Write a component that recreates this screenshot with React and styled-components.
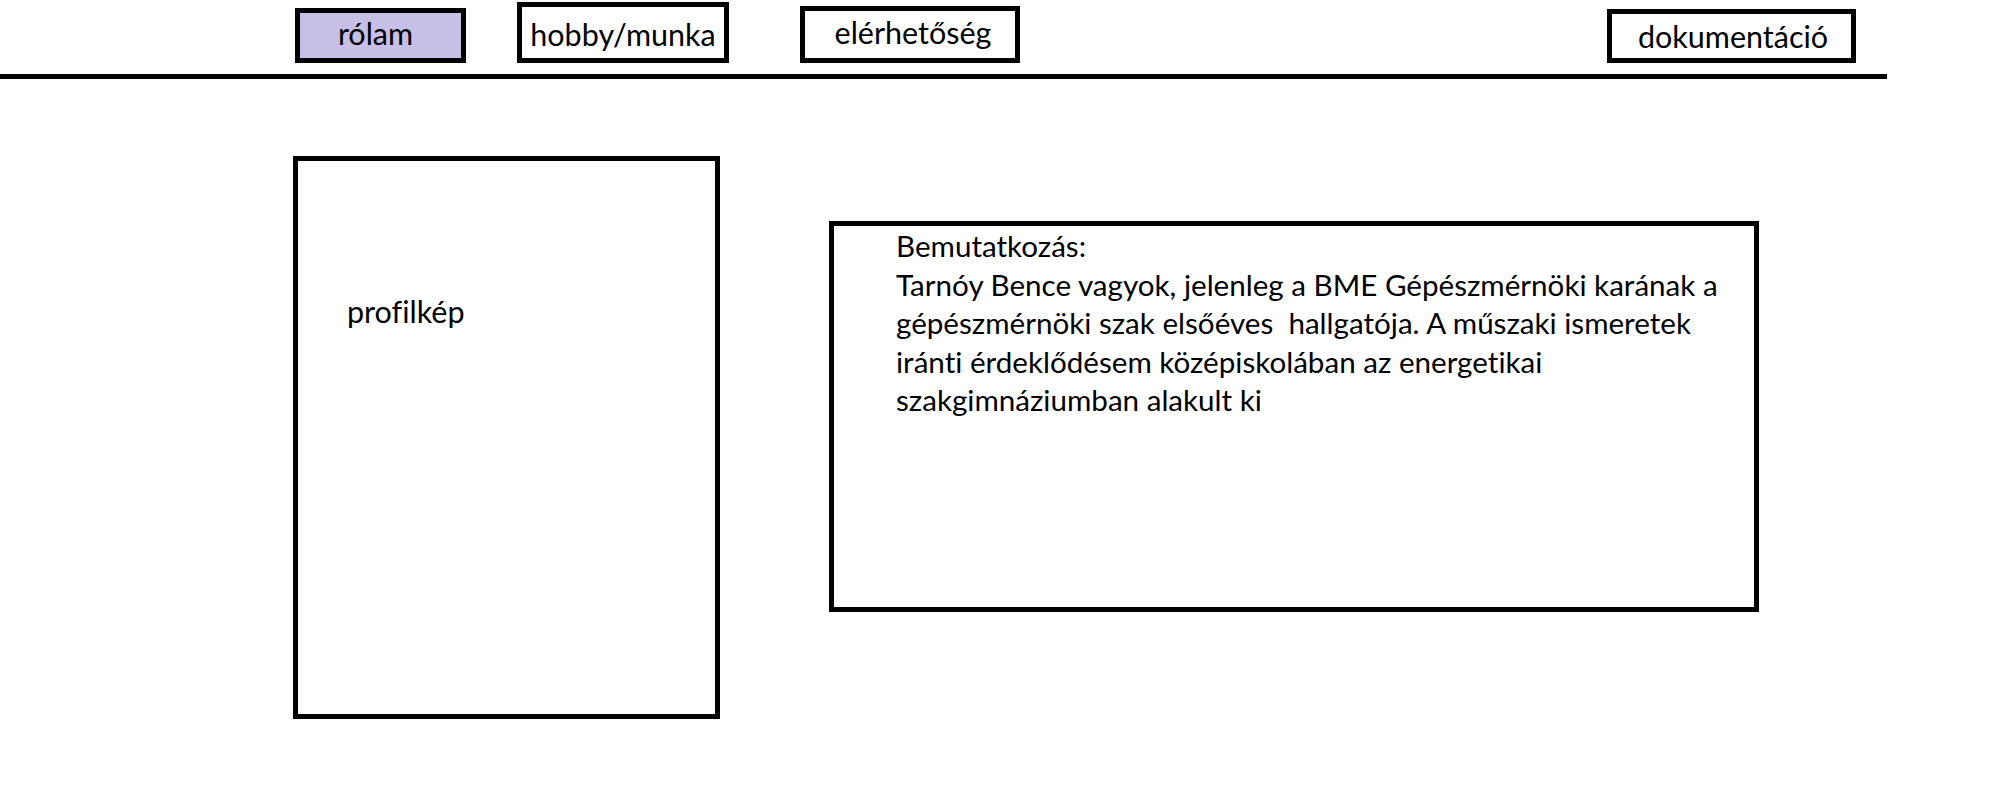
import React from 'react';
import styled, { createGlobalStyle } from 'styled-components';

const GlobalStyle = createGlobalStyle`
  * {
    box-sizing: border-box;
  }
  body {
    margin: 0;
    background: #fff;
    font-family: Lato, 'Open Sans', sans-serif;
    font-variant-ligatures: none;
    color: #000;
  }
`;

const Page = styled.div`
  width: 1996px;
  height: 808px;
  background: #fff;
`;

const Nav = styled.nav`
  display: flex;
  align-items: flex-end;
  padding-left: 295px;
  height: 63px;
`;

// dx / dy nudge the label inside its box, the sketch isn't perfectly centred
const NavItem = styled.a`
  display: flex;
  align-items: center;
  justify-content: center;
  width: ${({ w }) => w}px;
  height: ${({ h }) => h}px;
  margin-right: ${({ gap }) => gap || 0}px;
  padding: ${({ dy = 0, dx = 0 }) =>
    `${Math.max(dy, 0)}px ${Math.max(-dx, 0)}px ${Math.max(-dy, 0)}px ${Math.max(dx, 0)}px`};
  border: 5px solid #000;
  background: ${({ active }) => (active ? '#c8bfe7' : '#fff')};
  font-size: 30.5px;
  color: #000;
  text-decoration: none;
`;

const Rule = styled.hr`
  width: 1887px;
  height: 5px;
  margin: 11px 0 0;
  border: none;
  background: #000;
`;

const Content = styled.main`
  display: flex;
  align-items: flex-start;
  padding: 77px 0 0 293px;
  gap: 109px;
`;

const PhotoBox = styled.div`
  width: 427px;
  height: 563px;
  border: 5px solid #000;
  padding: 131px 0 0 49px;
  font-size: 30.5px;
  line-height: 39px;
`;

const IntroBox = styled.section`
  width: 930px;
  height: 391px;
  margin-top: 65px;
  border: 5px solid #000;
  padding: 1px 0 0 62px;
  font-size: 29.6px;
  line-height: 38.5px;
  white-space: pre;
`;

const Line = styled.div``;

const navItems = [
  { label: 'rólam', w: 171, h: 55, gap: 51, active: true, dy: -5, dx: -10 },
  { label: 'hobby/munka', w: 212, h: 61, gap: 71, dy: 2 },
  { label: 'elérhetőség', w: 220, h: 57, gap: 587, dy: -6, dx: 6 },
  { label: 'dokumentáció', w: 249, h: 54, dy: 0, dx: 3 },
];

const intro = [
  'Bemutatkozás:',
  'Tarnóy Bence vagyok, jelenleg a BME Gépészmérnöki karának a',
  'gépészmérnöki szak elsőéves  hallgatója. A műszaki ismeretek',
  'iránti érdeklődésem középiskolában az energetikai',
  'szakgimnáziumban alakult ki',
];

export default function App() {
  return (
    <Page>
      <GlobalStyle />
      <Nav>
        {navItems.map(({ label, ...rest }) => (
          <NavItem key={label} {...rest}>
            {label}
          </NavItem>
        ))}
      </Nav>
      <Rule />
      <Content>
        <PhotoBox>profilkép</PhotoBox>
        <IntroBox>
          {intro.map((l) => (
            <Line key={l}>{l}</Line>
          ))}
        </IntroBox>
      </Content>
    </Page>
  );
}
